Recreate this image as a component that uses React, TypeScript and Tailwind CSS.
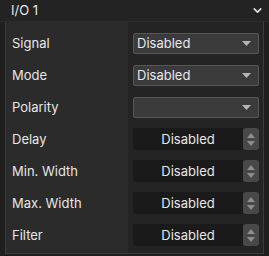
import { ChevronDown } from 'lucide-react';

const rows: { label: string; kind: 'select' | 'number'; value: string }[] = [
  { label: 'Signal', kind: 'select', value: 'Disabled' },
  { label: 'Mode', kind: 'select', value: 'Disabled' },
  { label: 'Polarity', kind: 'select', value: '' },
  { label: 'Delay', kind: 'number', value: 'Disabled' },
  { label: 'Min. Width', kind: 'number', value: 'Disabled' },
  { label: 'Max. Width', kind: 'number', value: 'Disabled' },
  { label: 'Filter', kind: 'number', value: 'Disabled' },
];

function SelectBox({ value }: { value: string }) {
  return (
    <div className="flex h-[21px] w-[126px] items-center justify-between rounded-[2px] border border-[#575757] bg-[#3b3b3b] pl-[3px] pr-[7px]">
      <span className="text-[13px] leading-none text-[#e8e8e8]">{value}</span>
      <svg width="9" height="5" viewBox="0 0 9 5">
        <path d="M0 0h9L4.5 5z" fill="#b5b5b5" />
      </svg>
    </div>
  );
}

function NumberBox({ value }: { value: string }) {
  return (
    <div className="flex h-[22px] w-[126px] items-stretch">
      <div className="flex flex-1 items-center justify-center rounded-l-[2px] bg-[#1a1a1a] text-[13px] leading-none text-[#e8e8e8]">
        {value}
      </div>
      <div className="flex w-[16px] flex-col items-center justify-center gap-[3px] rounded-[3px] bg-[#484848]">
        <svg width="8" height="5" viewBox="0 0 8 5">
          <path d="M4 0L8 5H0z" fill="#8c8c8c" />
        </svg>
        <svg width="8" height="5" viewBox="0 0 8 5">
          <path d="M0 0h8L4 5z" fill="#8c8c8c" />
        </svg>
      </div>
    </div>
  );
}

export default function App() {
  return (
    <div className="h-[256px] w-[269px] overflow-hidden bg-[#1f1f1f] font-['Inter',sans-serif]">
      <div className="flex h-[22px] items-center justify-between border-b border-[#2c2c2c] bg-[#232323] pl-[11px] pr-[5px]">
        <span className="text-[13px] leading-none text-[#e6e6e6]">I/O 1</span>
        <ChevronDown size={13} strokeWidth={3} className="text-[#e0e0e0]" />
      </div>
      <div className="mx-[5px] flex border border-t-0 border-[#3a3a3a]">
        <div className="flex w-[122px] flex-col bg-[#2b2b2b] pb-[2px] pt-[5px]">
          {rows.map(r => (
            <div key={r.label} className="flex h-[32px] items-center pl-[6px] pt-[1px] text-[13px] text-[#e6e6e6]">
              {r.label}
            </div>
          ))}
        </div>
        <div className="flex flex-1 flex-col bg-[#242424] pb-[2px] pl-[5px] pt-[5px]">
          {rows.map(r => (
            <div key={r.label} className="flex h-[32px] items-center">
              {r.kind === 'select' ? <SelectBox value={r.value} /> : <NumberBox value={r.value} />}
            </div>
          ))}
        </div>
      </div>
    </div>
  );
}
